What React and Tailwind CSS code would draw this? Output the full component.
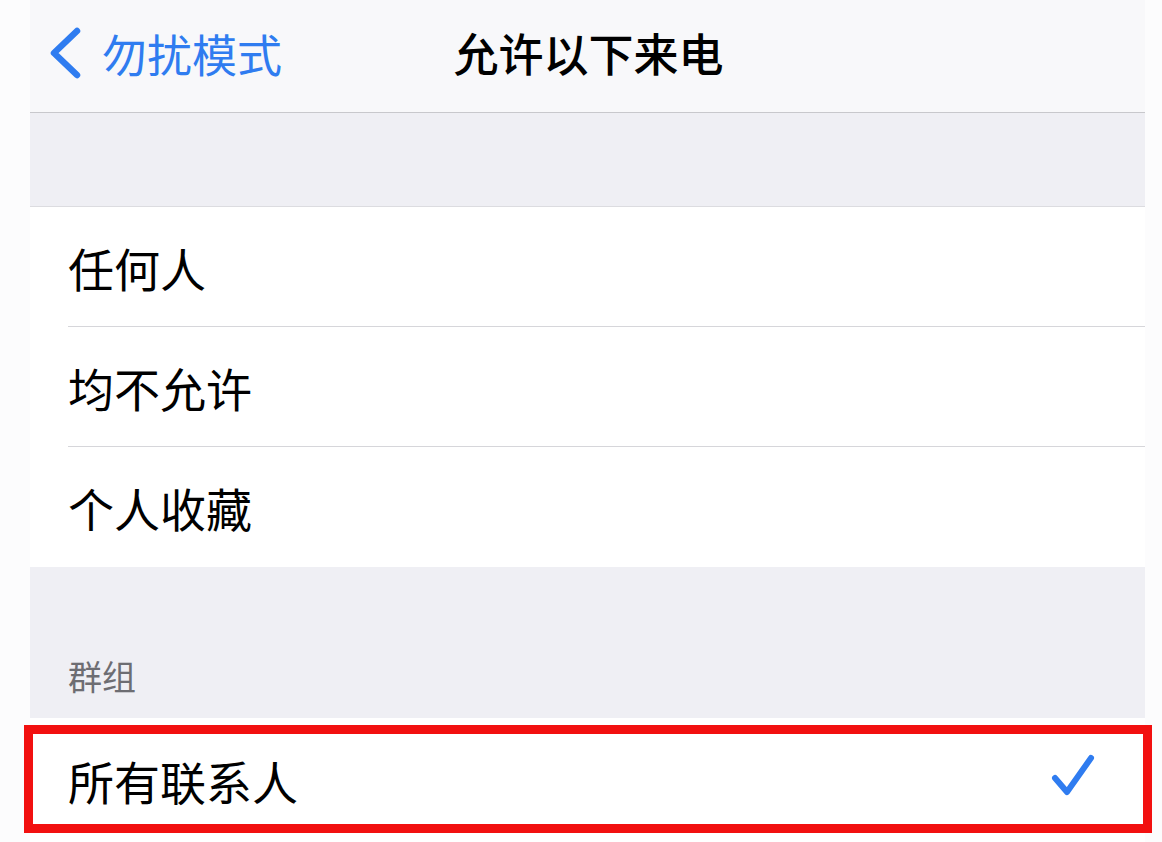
export default function App() {
  const font = { fontFamily: '"Noto Sans CJK SC", "Noto Sans", sans-serif' };
  const rows = ['任何人', '均不允许', '个人收藏'];

  return (
    <div className="h-[842px] w-[1162px] overflow-hidden bg-[#fcfcfd] pl-[30px] pr-[17px]" style={font}>
      <header className="relative flex h-[113px] items-center justify-center border-b border-[#c8c8cc] bg-[#f8f8fa]">
        <div className="absolute left-[18px] top-[27px] flex items-center gap-[20px] text-[#2f7cf0]">
          <svg width="34" height="52" viewBox="0 0 34 52" fill="none">
            <path d="M29 4 L6 26 L29 48" stroke="currentColor" strokeWidth="6.5" strokeLinecap="round" strokeLinejoin="round" />
          </svg>
          <span className="text-[45px] leading-none">勿扰模式</span>
        </div>
        <h1 className="-mt-[8px] ml-[2px] text-[45px] font-medium leading-none text-black">允许以下来电</h1>
      </header>

      <div className="h-[94px] border-b border-[#dcdce0] bg-[#efeff4]" />

      <ul className="bg-white">
        {rows.map((label, i) => (
          <li key={label} className="pl-[38px]">
            <div className={`flex h-[120px] items-center text-[46px] leading-none text-black ${i < rows.length - 1 ? 'border-b border-[#d6d6da]' : ''}`}>
              {label}
            </div>
          </li>
        ))}
      </ul>

      <div className="flex h-[151px] items-end bg-[#efeff4] pb-[25px] pl-[38px]">
        <span className="text-[34px] leading-none text-[#6d6d72]">群组</span>
      </div>

      <div className="relative flex h-[124px] items-center bg-white pl-[38px] pr-[50px]">
        <span className="flex-1 text-[46px] leading-none text-black">所有联系人</span>
        <svg width="44" height="42" viewBox="0 0 44 42" fill="none" className="-mt-[10px]">
          <path d="M4 24 L16 38 L40 4" stroke="#2f7cf0" strokeWidth="6" strokeLinecap="round" strokeLinejoin="round" />
        </svg>
        <div className="pointer-events-none absolute -left-[6px] -right-[7px] top-[7px] h-[108px] border-[9px] border-[#f21010]" />
      </div>
    </div>
  );
}
